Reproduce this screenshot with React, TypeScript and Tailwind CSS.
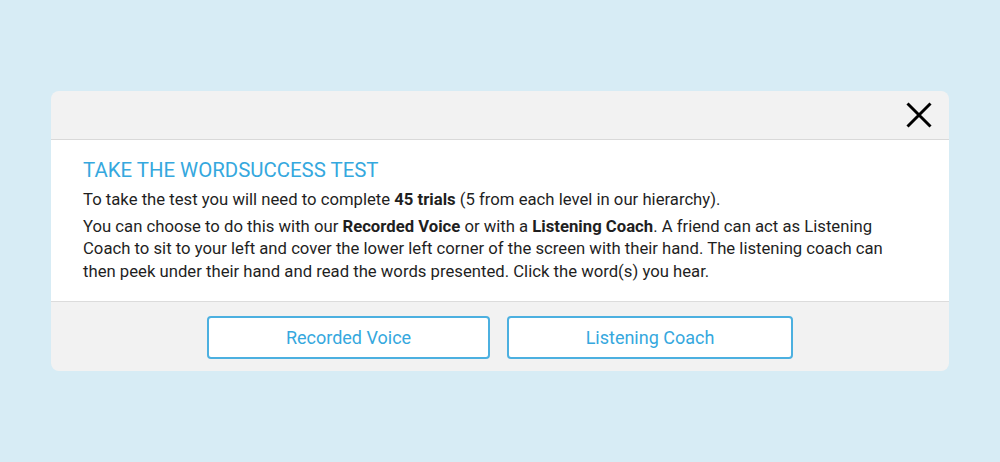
const App = () => {
  return (
    <div
      className="flex h-[462px] w-full items-center justify-center bg-[#d7ecf5]"
      style={{ fontFamily: "Roboto, 'Noto Sans', sans-serif" }}
    >
      <div className="w-[898px] overflow-hidden rounded-lg bg-[#f2f2f2]">
        <div className="flex h-[49px] items-center justify-end border-b border-[#d9d9d9] pr-[16px]">
          <button className="flex h-[28px] w-[28px] items-center justify-center">
            <svg width="26" height="26" viewBox="0 0 26 26">
              <path
                d="M1.5 1.5 L24.5 24.5 M24.5 1.5 L1.5 24.5"
                stroke="#000"
                strokeWidth="3"
              />
            </svg>
          </button>
        </div>
        <div className="bg-white px-8 pt-[16px] pb-[18px] text-[16.7px] leading-[22.5px] text-[#1f1f1f]">
          <h2 className="mb-[5px] text-[20.4px] leading-[28px] font-normal text-[#35a8de]">
            TAKE THE WORDSUCCESS TEST
          </h2>
          <p className="mb-[4px]">
            To take the test you will need to complete <b>45 trials</b> (5 from
            each level in our hierarchy).
          </p>
          <p>
            You can choose to do this with our <b>Recorded Voice</b> or with a{" "}
            <b>Listening Coach</b>. A friend can act as Listening Coach to sit
            to your left and cover the lower left corner of the screen with
            their hand. The listening coach can then peek under their hand and
            read the words presented. Click the word(s) you hear.
          </p>
        </div>
        <div className="flex justify-center gap-[17px] border-t border-[#dcdcdc] pt-[14px] pb-[12px]">
          <button className="h-[43px] w-[283px] rounded-[4px] border-2 border-[#4cb0e0] bg-white text-[18px] text-[#35a8de]">
            Recorded Voice
          </button>
          <button className="h-[43px] w-[286px] rounded-[4px] border-2 border-[#4cb0e0] bg-white text-[18px] text-[#35a8de]">
            Listening Coach
          </button>
        </div>
      </div>
    </div>
  );
};

export default App;
